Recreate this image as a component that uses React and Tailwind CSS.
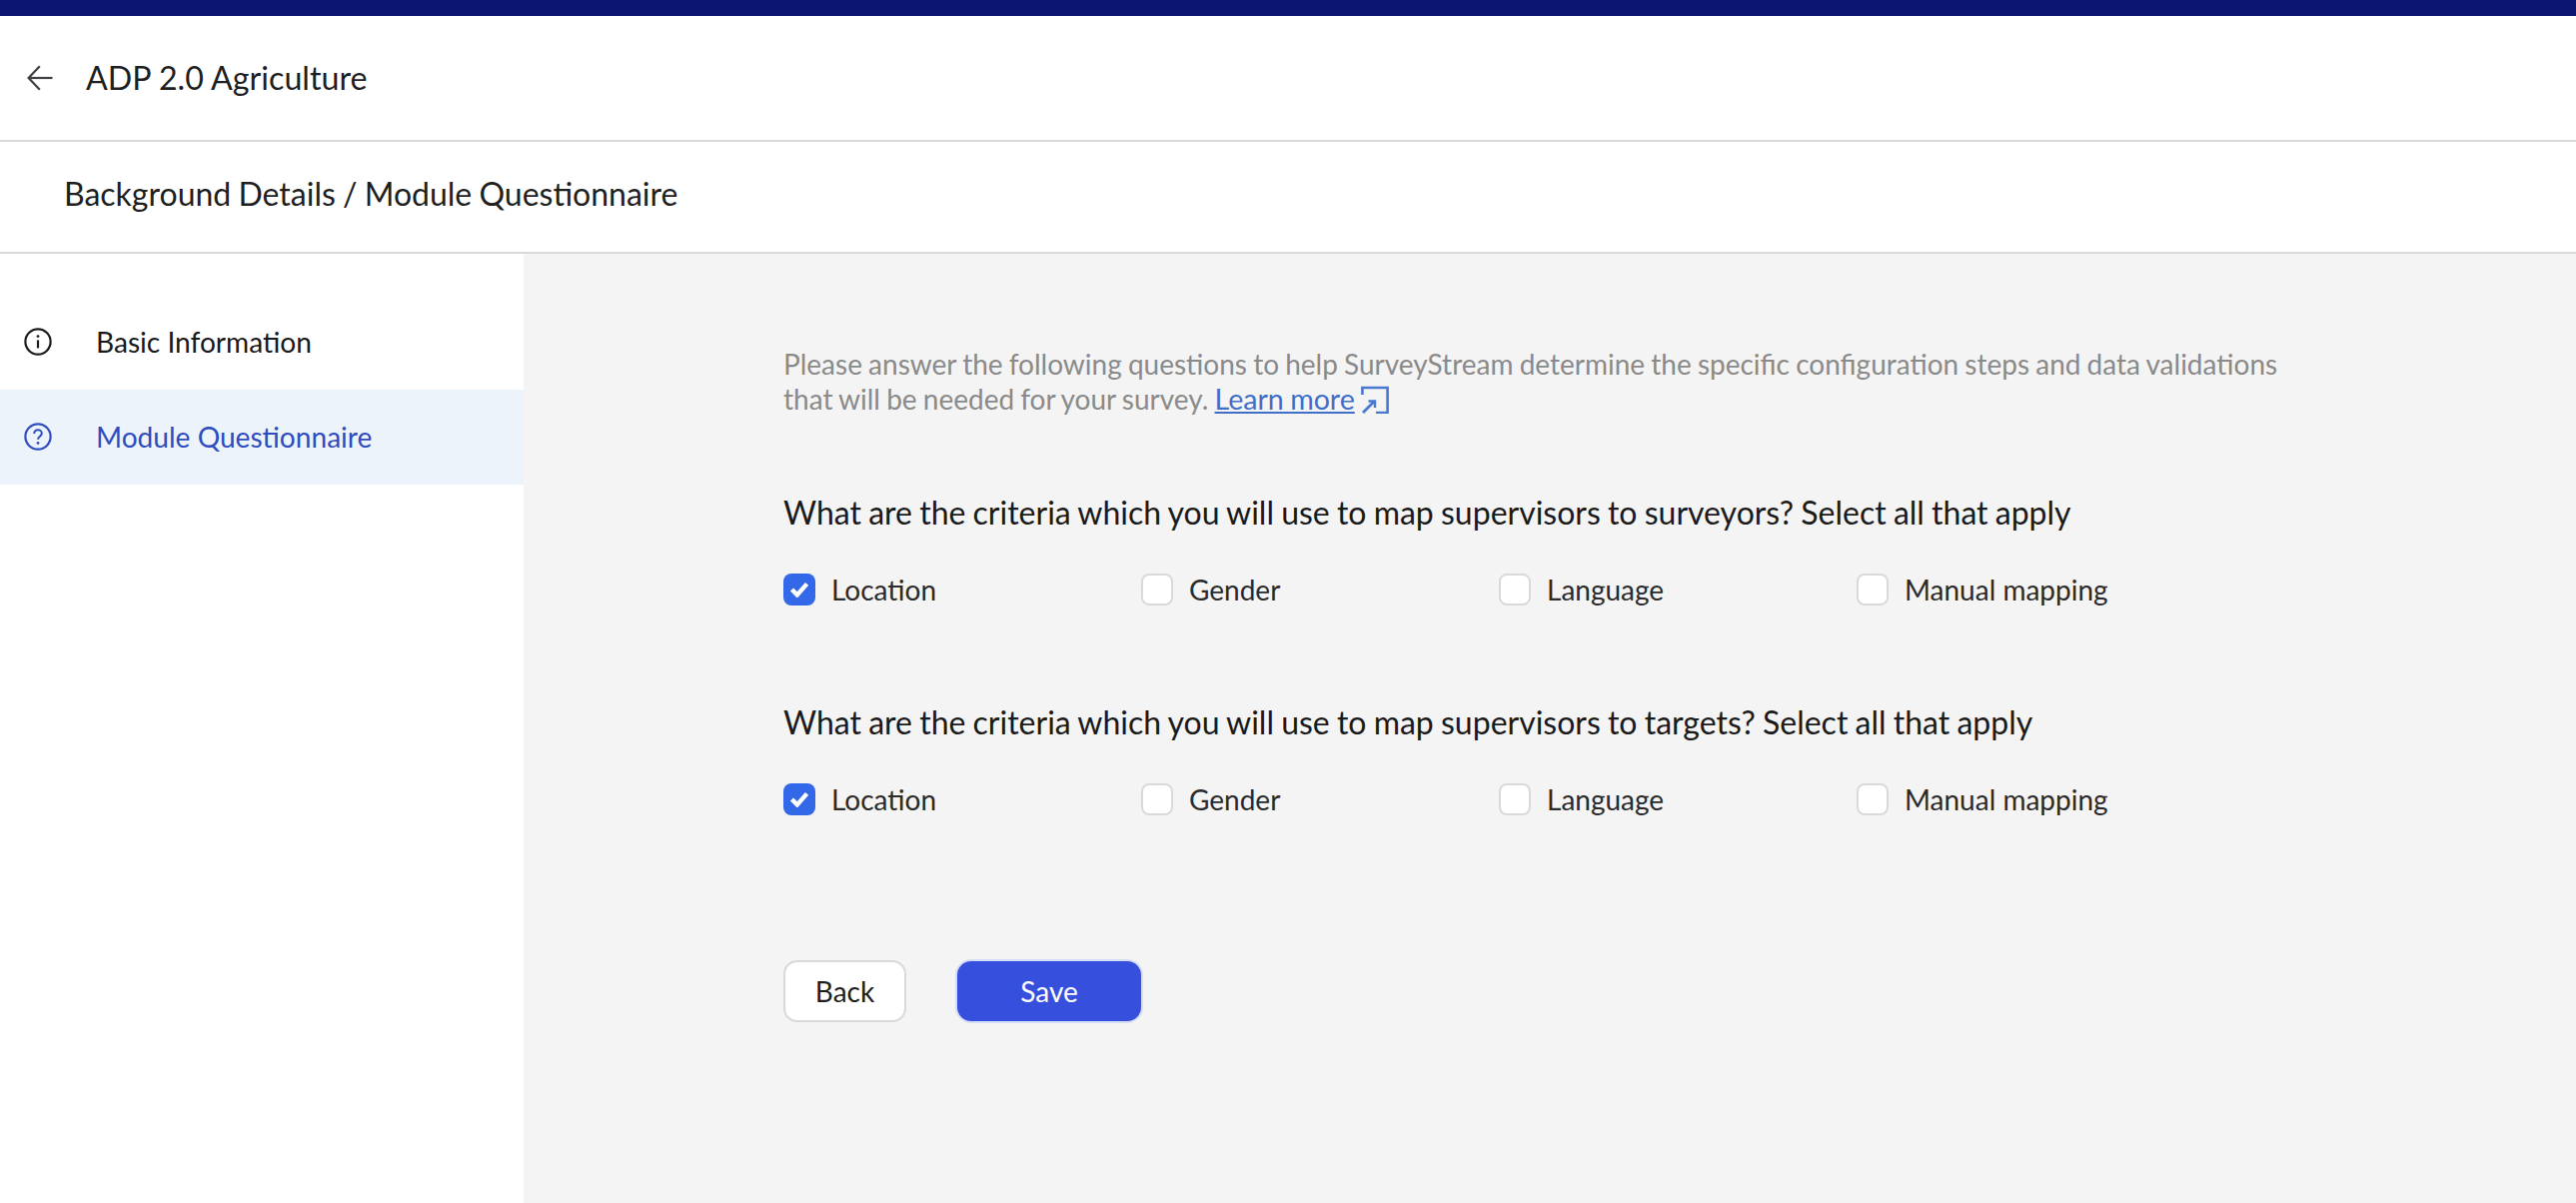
const lato = "font-['Lato','Noto_Sans',sans-serif]";

function ArrowBack() {
  return (
    <svg width="26" height="26" viewBox="0 0 26 26" fill="none" stroke="#3f3f46" strokeWidth="2.2">
      <path d="M25.5 13H1.8" />
      <path d="M12.8 1.2 1.6 13l11.2 11.8" />
    </svg>
  );
}

function InfoIcon() {
  return (
    <svg width="28" height="28" viewBox="0 0 28 28" fill="none" stroke="#1c1c1c" strokeWidth="2.2">
      <circle cx="14" cy="14" r="12.6" />
      <path d="M14 12.4v8" />
      <circle cx="14" cy="8.6" r="1.4" fill="#1c1c1c" stroke="none" />
    </svg>
  );
}

function QuestionIcon() {
  return (
    <svg width="28" height="28" viewBox="0 0 28 28" fill="none" stroke="#2f4cc0" strokeWidth="2.2">
      <circle cx="14" cy="14" r="12.6" />
      <path d="M10.2 11c0-2.2 1.7-3.7 3.8-3.7s3.8 1.4 3.8 3.4c0 3-3.8 3-3.8 6" strokeWidth="2" />
      <circle cx="14" cy="20.4" r="1.4" fill="#2f4cc0" stroke="none" />
    </svg>
  );
}

function LinkIcon() {
  return (
    <svg width="28" height="28" viewBox="0 0 28 28" fill="none" stroke="#4a78cf" strokeWidth="2.6" className="ml-[6px]">
      <path d="M1.4 9V2h25.2v25H15" />
      <path d="M2 27 13.5 15.5" strokeWidth="2.8" />
      <path d="M7.5 15.5h6.5V22" strokeWidth="2.4" />
    </svg>
  );
}

function Check({ label, checked }) {
  return (
    <div className="flex w-[358px] items-center">
      {checked ? (
        <span className="flex h-8 w-8 items-center justify-center rounded-lg bg-[#3369e8]">
          <svg width="20" height="16" viewBox="0 0 20 16" fill="none" stroke="#ffffff" strokeWidth="4.4">
            <path d="M2.5 8 7.8 13.4 17.5 2.4" />
          </svg>
        </span>
      ) : (
        <span className="h-8 w-8 rounded-lg border-2 border-[#d9d9d9] bg-white" />
      )}
      <span className="ml-4 text-[28px] leading-8 text-[#2b2b2b]">{label}</span>
    </div>
  );
}

function Question({ title, className }) {
  return (
    <section className={className}>
      <h2 className="text-[32px] leading-10 font-normal [word-spacing:-1px] text-[#1a1a1a]">{title}</h2>
      <div className="mt-[41px] flex">
        <Check label="Location" checked />
        <Check label="Gender" />
        <Check label="Language" />
        <Check label="Manual mapping" />
      </div>
    </section>
  );
}

export default function App() {
  return (
    <div className={`flex h-screen flex-col overflow-hidden bg-white ${lato}`}>
      <div className="h-4 shrink-0 bg-[#0a1670]" />
      <header className="flex h-[126px] shrink-0 items-center border-b-2 border-[#d9d9d9] pl-[27px]">
        <ArrowBack />
        <h1 className="ml-[33px] text-[32.2px] font-normal text-[#1f1f1f]">ADP 2.0 Agriculture</h1>
      </header>
      <div className="flex h-[112px] shrink-0 items-center border-b-2 border-[#d9d9d9] pb-[6px] pl-16">
        <h2 className="text-[32px] font-normal [word-spacing:-1px] text-[#1f1f1f]">Background Details / Module Questionnaire</h2>
      </div>
      <div className="flex min-h-0 flex-1">
        <nav className="w-[524px] shrink-0 pt-[41px]">
          <div className="flex h-[95px] items-center pl-6 text-[#1a1a1a]">
            <div className="-mt-[2px] flex">
              <InfoIcon />
            </div>
            <span className="-mt-[1px] ml-[44px] text-[28.1px]">Basic Information</span>
          </div>
          <div className="flex h-[95px] items-center bg-[#ecf3fb] pl-6 text-[#2f4cc0]">
            <div className="-mt-[2px] flex">
              <QuestionIcon />
            </div>
            <span className="-mt-[1px] ml-[44px] text-[28.1px]">Module Questionnaire</span>
          </div>
        </nav>
        <main className="flex-1 bg-[#f4f4f4] pt-[93px] pl-[260px]">
          <p className="w-[1510px] text-[28px] leading-[35px] [word-spacing:-1px] text-[#8a8a8a]">
            Please answer the following questions to help SurveyStream determine the specific configuration steps and data validations
            <br />
            that will be needed for your survey.{" "}
            <span className="inline-flex items-center align-top">
              <a className="text-[28.6px] text-[#3f6fc9] underline underline-offset-2">Learn more</a>
              <LinkIcon />
            </span>
          </p>
          <Question className="mt-[76px]" title="What are the criteria which you will use to map supervisors to surveyors? Select all that apply" />
          <Question className="mt-[97px]" title="What are the criteria which you will use to map supervisors to targets? Select all that apply" />
          <div className="mt-[145px] flex items-center">
            <button className="h-[62px] w-[123px] rounded-[14px] border-2 border-[#d9d9d9] bg-white text-[28px] text-[#1f1f1f]">Back</button>
            <button className="ml-[51px] h-[60px] w-[184px] rounded-[14px] bg-[#3650dd] text-[28px] text-white shadow-[0_0_0_2px_#d5dcf5]">Save</button>
          </div>
        </main>
      </div>
    </div>
  );
}
